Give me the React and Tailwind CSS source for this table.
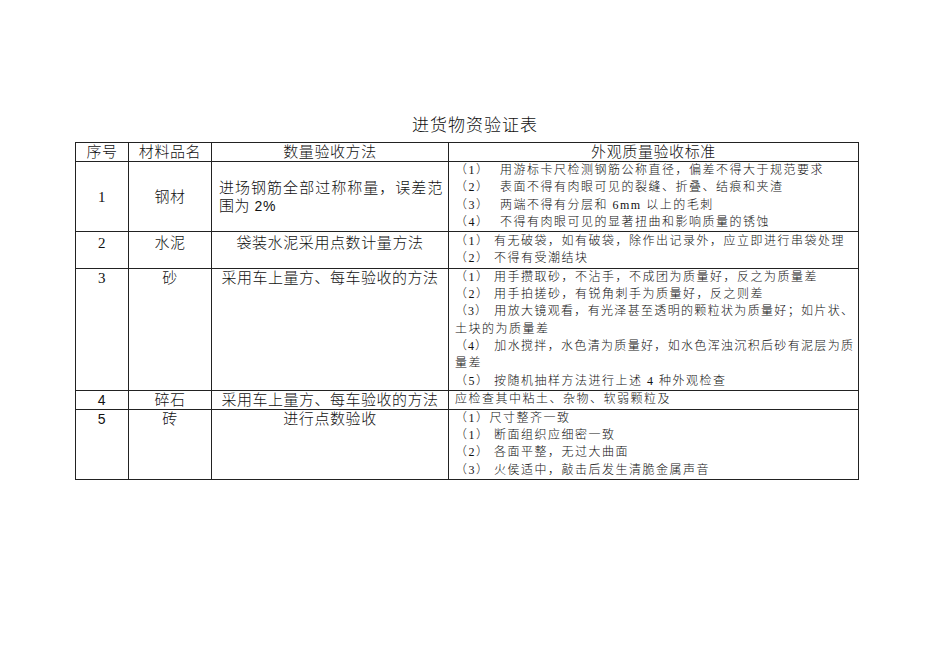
import React from "react";

const serif = { fontFamily: '"Liberation Serif", "Noto Sans CJK SC", serif' };

function P({ n, w = "w-[39px]", children }) {
  return (
    <div className="whitespace-nowrap">
      <span className={`inline-block ${w}`}>（{n}）</span>
      {children}
    </div>
  );
}

export default function App() {
  const cellL = "border border-[#222] text-center align-top text-[15px] leading-[18px] tracking-[0.6px] px-[4px]";
  const cellR = "border border-[#222] align-top text-[12px] leading-[17.3px] tracking-[1.5px] pl-[6px] pr-[4px]";
  const sans = { fontFamily: '"Liberation Sans", sans-serif', fontSize: 14 };
  return (
    <div className="w-[950px] h-[672px] bg-white text-[#111] font-light" style={serif}>
      <div className="pt-[116px]">
        <div className="text-center text-[17px] leading-[20px] tracking-[1px]">进货物资验证表</div>
        <table className="mt-[6px] ml-[75px] border-collapse table-fixed w-[783px]">
          <colgroup>
            <col className="w-[53px]" />
            <col className="w-[83px]" />
            <col className="w-[237px]" />
            <col className="w-[410px]" />
          </colgroup>
          <tbody>
            <tr className="h-[19px]">
              <td className={cellL + " !align-middle !leading-[17px]"}>序号</td>
              <td className={cellL + " !align-middle !leading-[17px]"}>材料品名</td>
              <td className={cellL + " !align-middle !leading-[17px]"}>数量验收方法</td>
              <td className={cellL + " !align-middle !leading-[17px]"}>外观质量验收标准</td>
            </tr>
            <tr>
              <td className={cellL + " !align-middle"}>1</td>
              <td className={cellL + " !align-middle"}>钢材</td>
              <td className={cellL + " !align-middle !text-left !pl-[7px] !pr-[5px]"}>
                <div className="[text-align-last:justify]">进场钢筋全部过称称量，误差范</div>
                <div>围为 <span style={{ fontFamily: '"Liberation Sans", sans-serif' }} className="text-[14px]">2%</span></div>
              </td>
              <td className={cellR}>
                <P n="1" w="w-[45px]">用游标卡尺检测钢筋公称直径，偏差不得大于规范要求</P>
                <P n="2" w="w-[45px]">表面不得有肉眼可见的裂缝、折叠、结痕和夹渣</P>
                <P n="3" w="w-[45px]">两端不得有分层和 6mm 以上的毛刺</P>
                <P n="4" w="w-[45px]">不得有肉眼可见的显著扭曲和影响质量的锈蚀</P>
              </td>
            </tr>
            <tr>
              <td className={cellL + " pt-[2px]"}>2</td>
              <td className={cellL + " pt-[2px]"}>水泥</td>
              <td className={cellL + " pt-[2px]"}>袋装水泥采用点数计量方法</td>
              <td className={cellR + " pt-[1px]"}>
                <P n="1">有无破袋，如有破袋，除作出记录外，应立即进行串袋处理</P>
                <P n="2">不得有受潮结块</P>
              </td>
            </tr>
            <tr>
              <td className={cellL}>3</td>
              <td className={cellL}>砂</td>
              <td className={cellL + " !px-[2px] !tracking-[0.5px]"}>采用车上量方、每车验收的方法</td>
              <td className={cellR}>
                <P n="1">用手攒取砂，不沾手，不成团为质量好，反之为质量差</P>
                <P n="2">用手拍搓砂，有锐角刺手为质量好，反之则差</P>
                <div className="[text-align-last:justify] tracking-[1px]">
                  <span className="inline-block w-[39px] [text-align-last:auto]">（3）</span>用放大镜观看，有光泽甚至透明的颗粒状为质量好；如片状、
                </div>
                <div>土块的为质量差</div>
                <div className="[text-align-last:justify] tracking-[1px]">
                  <span className="inline-block w-[39px] [text-align-last:auto]">（4）</span>加水搅拌，水色清为质量好，如水色浑浊沉积后砂有泥层为质
                </div>
                <div>量差</div>
                <P n="5">按随机抽样方法进行上述 4 种外观检查</P>
              </td>
            </tr>
            <tr>
              <td className={cellL + " !align-middle"} style={sans}>4</td>
              <td className={cellL + " !align-middle"}>碎石</td>
              <td className={cellL + " !align-middle !px-[2px] !tracking-[0.5px]"}>采用车上量方、每车验收的方法</td>
              <td className={cellR + " !align-middle"}>应检查其中粘土、杂物、软弱颗粒及</td>
            </tr>
            <tr>
              <td className={cellL} style={sans}>5</td>
              <td className={cellL}>砖</td>
              <td className={cellL}>进行点数验收</td>
              <td className={cellR}>
                <div>（1）尺寸整齐一致</div>
                <P n="1">断面组织应细密一致</P>
                <P n="2">各面平整，无过大曲面</P>
                <P n="3">火侯适中，敲击后发生清脆金属声音</P>
              </td>
            </tr>
          </tbody>
        </table>
      </div>
    </div>
  );
}
